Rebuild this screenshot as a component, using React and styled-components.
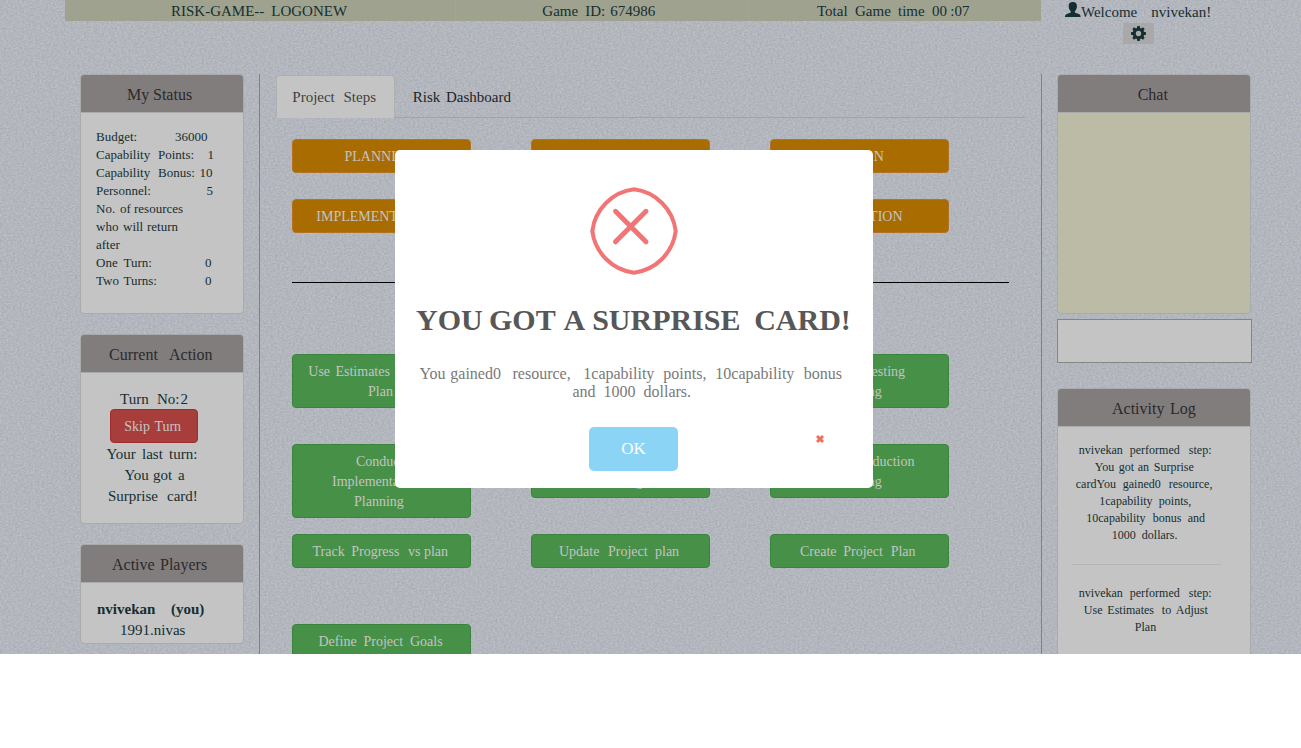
import React from "react";
import styled, { createGlobalStyle, css } from "styled-components";

const serif = '"Liberation Serif", "Times New Roman", serif';
const c = {
  ink: "#152e31",
  paper: "#c4c4c4",
  head: "#827d7d",
  edge: "#a9aaac",
  rule: "#7e8187",
};

const Global = createGlobalStyle`
  *, *::before, *::after { box-sizing: border-box; }
  body { margin: 0; background: #fff; font-family: ${serif}; color: ${c.ink}; overflow: hidden; }
  button { font-family: inherit; margin: 0; }
`;

const Page = styled.div`
  position: relative;
  height: 654px;
  width: 1301px;
  overflow: hidden;
  background: #b2b6bf;
`;
const Linen = styled.svg`
  position: absolute;
  inset: 0;
  width: 100%;
  height: 100%;
`;
const Content = styled.div`
  position: relative;
  padding-left: 65px;
`;

/* A line of text whose words advance by set amounts. */
const Line = styled.div`
  display: flex;
  white-space: pre;
  padding-left: ${(p) => p.$in || 0}px;
`;
const Word = styled.span`
  flex: none;
  width: ${(p) => (p.$w ? p.$w + "px" : "auto")};
`;
const Words = ({ x, parts, ...rest }) => (
  <Line $in={x} {...rest}>
    {parts.map(([t, w], i) => (
      <Word key={i} $w={w}>{t + (i < parts.length - 1 ? " " : "")}</Word>
    ))}
  </Line>
);

const Top = styled.header`
  display: flex;
  height: 74px;
  font-size: 15px;
  line-height: 21px;
`;
const Bar = styled.div`
  display: flex;
  width: 976px;
  height: 21px;
  background: #9fa28f;
`;
const BarCell = styled.div`
  width: ${(p) => p.$w}px;
  height: 21px;
  padding-top: 1px;
  border-right: ${(p) => (p.$last ? "none" : "1px solid #a3a695")};
`;
const User = styled.div`
  width: 195px;
  display: flex;
  flex-direction: column;
`;
const UserLine = styled.div`
  display: flex;
  padding: 2px 0 0 24px;
  height: 23px;
  svg { flex: none; width: 16px; height: 15px; }
`;
const GearButton = styled.button`
  width: 31px;
  height: 21px;
  margin-left: 82px;
  padding: 2px 8px;
  border: 0;
  background: #a9a9a9;
  svg { display: block; }
`;

const Columns = styled.div`
  display: flex;
  align-items: flex-start;
  height: 580px;
`;
const Left = styled.aside`
  width: 194px;
  height: 580px;
  padding-left: 15px;
`;
const Main = styled.main`
  width: 783px;
  height: 580px;
  border: solid ${c.rule};
  border-width: 0 1px;
  padding: 1px 15px 0 16px;
`;
const Right = styled.aside`
  width: 211px;
  padding-left: 15px;
`;
const Panel = styled.section`
  width: ${(p) => p.$w}px;
  height: ${(p) => p.$h}px;
  margin-bottom: ${(p) => p.$gap || 0}px;
  border: 1px solid ${c.edge};
  border-radius: 4px;
  background: ${(p) => p.$bg || c.paper};
  overflow: hidden;
`;
const PanelHead = styled.h2`
  margin: 0;
  height: 38px;
  padding-top: 10px;
  font-size: 16px;
  line-height: 20px;
  font-weight: 400;
  color: #2a2a2b;
  background: ${c.head};
  border-bottom: 1px solid ${c.edge};
`;
const PanelBody = styled.div`
  padding-top: ${(p) => p.$top || 15}px;
  font-size: ${(p) => p.$size}px;
  line-height: ${(p) => p.$lh}px;
`;
const Strong = styled.div`
  font-weight: 700;
`;
const SkipButton = styled.button`
  display: block;
  width: 88px;
  height: 34px;
  margin: -1px 0 1px 29.4px;
  padding: 1px 0 0;
  border: 1px solid #a02c2b;
  border-radius: 4px;
  background: #a83e3c;
  color: ${c.paper};
  font-size: 14px;
  line-height: 20px;
`;
const LogRule = styled.hr`
  width: 149px;
  margin: 20px 0 20px 14px;
  border: 0;
  border-top: 1px solid #b5b5b5;
`;
const ChatInput = styled.input`
  display: block;
  width: 195px;
  height: 44px;
  margin: 0 0 25px;
  border: 1px solid #858585;
  background: ${c.paper};
`;

const Tabs = styled.nav`
  display: flex;
  height: 43px;
  border-bottom: 1px solid #a2a5a8;
  font-size: 15px;
  line-height: 20px;
`;
const Tab = styled.div`
  width: ${(p) => p.$w}px;
  padding-top: 12px;
  ${(p) =>
    p.$active
      ? css`
          height: 43px;
          padding-top: 11px;
          background: ${c.paper};
          border: 1px solid #aeb0b2;
          border-bottom: 0;
          border-radius: 4px 4px 0 0;
          color: #414141;
        `
      : css`
          color: #222426;
        `}
`;
const Steps = styled.div`
  padding-left: 16px;
`;
const Grid = styled.div`
  display: grid;
  grid-template-columns: repeat(3, 179px);
  column-gap: 60px;
  align-items: start;
  padding-top: ${(p) => p.$top || 0}px;
  height: ${(p) => p.$h}px;
`;
const Step = styled.button`
  display: block;
  width: 179px;
  height: ${(p) => 14 + 20 * (p.$lines || 1)}px;
  padding: 7px 0 5px;
  font-size: 14px;
  line-height: 20px;
  text-align: left;
  color: ${c.paper};
  border-radius: 4px;
  border: 1px solid ${(p) => (p.$kind === "phase" ? "#b27424" : "#39853b")};
  background: ${(p) => (p.$kind === "phase" ? "#a86c00" : "#479048")};
`;
const Divider = styled.hr`
  width: 717px;
  margin: 0;
  border: 0;
  border-top: 1px solid #000;
`;

const Modal = styled.div`
  position: absolute;
  left: 395px;
  top: 150px;
  width: 477.5px;
  height: 338px;
  border-radius: 5px;
  background: #fff;
`;
const ModalIcon = styled.svg`
  display: block;
  width: 88px;
  height: 88px;
  margin: 37px 0 0 194.5px;
`;
const Title = styled.h1`
  margin: 25px 0 0;
  font-size: 30px;
  line-height: 40px;
  font-weight: 700;
  color: #575757;
`;
const Message = styled.div`
  margin-top: 25px;
  font-size: 16px;
  line-height: 18px;
  color: #797979;
`;
const Actions = styled.div`
  display: flex;
  padding: 26px 0 0 194px;
  svg { margin: 8px 0 0 138px; }
`;
const OkButton = styled.button`
  width: 89px;
  height: 44px;
  padding: 0;
  border: 0;
  border-radius: 5px;
  background: #8cd4f5;
  color: #fff;
  font-size: 17px;
`;

const PersonIcon = () => (
  <svg viewBox="0 0 16 15" fill={c.ink}>
    <path d="M7.800 0C5 0 3.600 1.500 3.700 3.900c0 2.300.7 4.100 2 5.200v1.300c-.8.600-3 1-4.400 1.800C.3 12.900 0 13.700 0 15h15.600c0-1.300-.3-2.100-1.300-2.800-1.400-.8-3.600-1.200-4.400-1.800V9.100c1.300-1.100 2-2.900 2-5.200C12 1.500 10.600 0 7.800 0z" />
  </svg>
);
const GearIcon = () => (
  <svg width="15" height="15" viewBox="0 0 15 15">
    <circle cx="7.500" cy="7.500" r="4.200" fill="none" stroke={c.ink} strokeWidth="3" />
    {[0, 45, 90, 135].map((a) => (
      <path key={a} transform={`rotate(${a} 7.5 7.5)`} fill={c.ink} d="M6.300 0h2.400l.5 2.500H5.800zM6.300 15h2.400l.5-2.500H5.800z" />
    ))}
  </svg>
);

const status = [
  [["Budget:", 79], ["36000"]],
  [["Capability", 62], ["Points:", 49.5], ["1"]],
  [["Capability", 62], ["Bonus:", 41.5], ["10"]],
  [["Personnel:", 110.5], ["5"]],
  [["No.", 24], ["of", 14], ["resources"]],
  [["who", 27], ["will", 24], ["return"]],
  [["after"]],
  [["One", 27.5], ["Turn:", 81.5], ["0"]],
  [["Two", 27.5], ["Turns:", 81.5], ["0"]],
];
const log1 = [
  [20.8, [["nvivekan", 51], ["performed", 59], ["step:"]]],
  [36.8, [["You", 24], ["got", 19], ["an", 16], ["Surprise"]]],
  [17.8, [["cardYou", 47], ["gained0", 46], ["resource,"]]],
  [41.3, [["1capability", 59.5], ["points,"]]],
  [28.3, [["10capability", 66.5], ["bonus", 35], ["and"]]],
  [53.8, [["1000", 30], ["dollars."]]],
];
const log2 = [
  [20.8, [["nvivekan", 51], ["performed", 59], ["step:"]]],
  [25.8, [["Use", 23.5], ["Estimates", 54.5], ["to", 14], ["Adjust"]]],
  [76.8, [["Plan"]]],
];
const Lines = ({ rows }) => rows.map(([x, parts], i) => <Words key={i} x={x} parts={parts} />);
const Button = ({ kind, rows }) => (
  <Step $kind={kind} $lines={rows.length}>
    <Lines rows={rows} />
  </Step>
);

export default function App() {
  return (
    <>
      <Global />
      <Page>
        <Linen>
          <filter id="weave" x="0" y="0" width="100%" height="100%" colorInterpolationFilters="sRGB">
            <feTurbulence type="fractalNoise" baseFrequency="0.45 0.6" numOctaves="2" seed="4" />
            <feColorMatrix values="0.14 0 0 0 0.631  0.14 0 0 0 0.645  0.09 0.05 0 0 0.672  0 0 0 0 1" />
          </filter>
          <rect width="100%" height="100%" filter="url(#weave)" />
        </Linen>
        <Content>
          <Top>
            <Bar>
              <BarCell $w={391}><Words x={106} parts={[["RISK-GAME--", 100.3], ["LOGONEW"]]} /></BarCell>
              <BarCell $w={293}><Words x={86.3} parts={[["Game", 43], ["ID:", 25], ["674986"]]} /></BarCell>
              <BarCell $w={292} $last><Words x={68} parts={[["Total", 38], ["Game", 43], ["time", 34], ["00", 18.3], [":07"]]} /></BarCell>
            </Bar>
            <User>
              <UserLine><PersonIcon /><Words parts={[["Welcome", 70.3], ["nvivekan!"]]} /></UserLine>
              <GearButton><GearIcon /></GearButton>
            </User>
          </Top>
          <Columns>
            <Left>
              <Panel $w={164} $h={240} $gap={20}>
                <PanelHead><Words x={46} parts={[["My", 26], ["Status"]]} /></PanelHead>
                <PanelBody $size={13} $lh={18}>
                  {status.map((parts, i) => <Words key={i} x={15} parts={parts} />)}
                </PanelBody>
              </Panel>
              <Panel $w={164} $h={190} $gap={20}>
                <PanelHead><Words x={28} parts={[["Current", 60]  , ["Action"]]} /></PanelHead>
                <PanelBody $size={15} $lh={21} $top={16}>
                  <Words x={39} parts={[["Turn", 37], ["No:", 23.5], ["2"]]} />
                  <SkipButton><Words x={12} parts={[["Skip", 31], ["Turn"]]} /></SkipButton>
                  <Words x={25.5} parts={[["Your", 35.5], ["last", 27], ["turn:"]]} />
                  <Words x={43.5} parts={[["You", 28.5], ["got", 25], ["a"]]} />
                  <Words x={27} parts={[["Surprise", 59], ["card!"]]} />
                </PanelBody>
              </Panel>
              <Panel $w={164} $h={100}>
                <PanelHead><Words x={31} parts={[["Active", 48], ["Players"]]} /></PanelHead>
                <PanelBody $size={15} $lh={21} $top={16}>
                  <Strong><Words x={16} parts={[["nvivekan", 74], ["(you)"]]} /></Strong>
                  <Words x={39} parts={[["1991.nivas"]]} />
                </PanelBody>
              </Panel>
            </Left>
            <Main>
              <Tabs>
                <Tab $w={119} $active><Words x={15.3} parts={[["Project", 51.2], ["Steps"]]} /></Tab>
                <Tab $w={200}><Words x={17.8} parts={[["Risk", 33.2], ["Dashboard"]]} /></Tab>
              </Tabs>
              <Steps>
                <Grid $top={21} $h={81}>
                  <Button kind="phase" rows={[[51.5, [["PLANNING"]]]]} />
                  <Button kind="phase" rows={[[50, [["ANALYSIS"]]]]} />
                  <Button kind="phase" rows={[[61.5, [["DESIGN"]]]]} />
                </Grid>
                <Grid $h={83}>
                  <Button kind="phase" rows={[[23.3, [["IMPLEMENTATION"]]]]} />
                  <Button kind="phase" rows={[[57, [["TESTING"]]]]} />
                  <Button kind="phase" rows={[[41.3, [["PRODUCTION"]]]]} />
                </Grid>
                <Divider />
                <Grid $top={71} $h={161}>
                  <Button rows={[[15.3, [["Use", 27.2], ["Estimates", 60], ["to", 14], ["Adjust"]]], [75, [["Plan"]]]]} />
                  <Button rows={[[33, [["Conduct", 54], ["Design"]]], [61, [["Planning"]]]]} />
                  <Button rows={[[36, [["Conduct", 57], ["Testing"]]], [61, [["Planning"]]]]} />
                </Grid>
                <Grid $h={90}>
                  <Button rows={[[63, [["Conduct"]]], [39, [["Implementation"]]], [61, [["Planning"]]]]} />
                  <Button rows={[[33, [["Conduct", 54], ["Analysis"]]], [61, [["Planning"]]]]} />
                  <Button rows={[[25, [["Conduct", 57], ["Production"]]], [61, [["Planning"]]]]} />
                </Grid>
                <Grid $h={90}>
                  <Button rows={[[19.5, [["Track", 38.7], ["Progress", 56.7], ["vs", 16], ["plan"]]]]} />
                  <Button rows={[[27, [["Update", 49], ["Project", 47], ["plan"]]]]} />
                  <Button rows={[[29, [["Create", 43.2], ["Project", 47.5], ["Plan"]]]]} />
                </Grid>
                <Grid $h={34}>
                  <Button rows={[[25.5, [["Define", 45], ["Project", 46.5], ["Goals"]]]]} />
                </Grid>
              </Steps>
            </Main>
            <Right>
              <Panel $w={194.4} $h={240} $gap={5} $bg="#bcbca6">
                <PanelHead><Words x={79.7} parts={[["Chat"]]} /></PanelHead>
              </Panel>
              <ChatInput />
              <Panel $w={194.4} $h={300}>
                <PanelHead><Words x={54} parts={[["Activity", 58], ["Log"]]} /></PanelHead>
                <PanelBody $size={12} $lh={17}>
                  <Lines rows={log1} />
                  <LogRule />
                  <Lines rows={log2} />
                </PanelBody>
              </Panel>
            </Right>
          </Columns>
        </Content>
      </Page>
      <Modal>
        <ModalIcon viewBox="0 0 88 88" fill="none" stroke="#f27474">
          <path strokeWidth="4" d="M44 2.300A48 48 0 0 1 85.700 44A48 48 0 0 1 44 85.700A48 48 0 0 1 2.300 44A48 48 0 0 1 44 2.300Z" />
          <path strokeWidth="5" strokeLinecap="round" d="M25.500 24.300l30.500 30.500M56 24.300l-30.500 30.500" />
        </ModalIcon>
        <Title><Words x={21} parts={[["YOU", 73], ["GOT", 74.5], ["A", 28.7], ["SURPRISE", 162], ["CARD!"]]} /></Title>
        <Message>
          <Words x={24.5} parts={[["You", 30.8], ["gained0", 62.2], ["resource,", 70.8], ["1capability", 80], ["points,", 52], ["10capability", 88.5], ["bonus"]]} />
          <Words x={177.5} parts={[["and", 31], ["1000", 40], ["dollars."]]} />
        </Message>
        <Actions>
          <OkButton>OK</OkButton>
          <svg width="8" height="8" viewBox="0 0 8 8" stroke="#f0705a" strokeWidth="3">
            <path d="M1 1l6 6M7 1L1 7" />
          </svg>
        </Actions>
      </Modal>
    </>
  );
}
